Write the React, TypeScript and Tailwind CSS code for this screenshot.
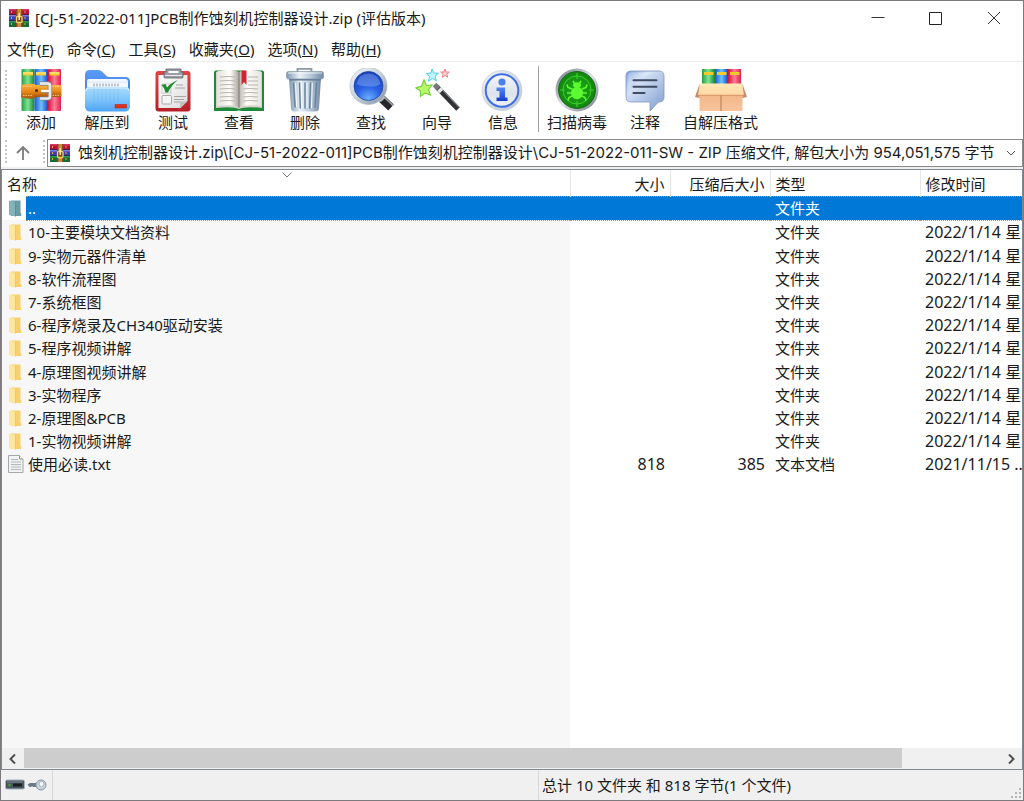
import React, { useState } from 'react';

interface Entry {
  name: string;
  kind: 'up' | 'folder' | 'text';
  size?: string;
  packed?: string;
  type: string;
  modified?: string;
}

const entries: Entry[] = [
  { name: '..', kind: 'up', type: '文件夹' },
  { name: '10-主要模块文档资料', kind: 'folder', type: '文件夹', modified: '2022/1/14 星' },
  { name: '9-实物元器件清单', kind: 'folder', type: '文件夹', modified: '2022/1/14 星' },
  { name: '8-软件流程图', kind: 'folder', type: '文件夹', modified: '2022/1/14 星' },
  { name: '7-系统框图', kind: 'folder', type: '文件夹', modified: '2022/1/14 星' },
  { name: '6-程序烧录及CH340驱动安装', kind: 'folder', type: '文件夹', modified: '2022/1/14 星' },
  { name: '5-程序视频讲解', kind: 'folder', type: '文件夹', modified: '2022/1/14 星' },
  { name: '4-原理图视频讲解', kind: 'folder', type: '文件夹', modified: '2022/1/14 星' },
  { name: '3-实物程序', kind: 'folder', type: '文件夹', modified: '2022/1/14 星' },
  { name: '2-原理图&PCB', kind: 'folder', type: '文件夹', modified: '2022/1/14 星' },
  { name: '1-实物视频讲解', kind: 'folder', type: '文件夹', modified: '2022/1/14 星' },
  { name: '使用必读.txt', kind: 'text', size: '818', packed: '385', type: '文本文档', modified: '2021/11/15 ..' },
];

const menus = [
  { label: '文件', accel: 'F' },
  { label: '命令', accel: 'C' },
  { label: '工具', accel: 'S' },
  { label: '收藏夹', accel: 'O' },
  { label: '选项', accel: 'N' },
  { label: '帮助', accel: 'H' },
];

const RarIcon = () => (
  <svg className="h-5 w-5 shrink-0" viewBox="0 0 20 20" aria-hidden="true">
    <rect x="0" y="1" width="20" height="6" fill="#b3123f" />
    <rect x="0" y="1" width="20" height="1.5" fill="#d8386a" />
    <rect x="0" y="7" width="20" height="6" fill="#3b3fb0" />
    <rect x="0" y="7" width="20" height="1.5" fill="#7d7fe0" />
    <rect x="0" y="13" width="20" height="6" fill="#176b34" />
    <rect x="0" y="13" width="20" height="1.5" fill="#2f9a53" />
    <path d="M0 6.5H20M0 12.5H20" stroke="#2b2346" strokeWidth=".8" />
    <path d="M2.5 3v2M2.5 9v2M2.5 15v2M16 3v2M16 9v2M16 15v2" stroke="#e0a838" strokeWidth="1" />
    <rect x="7" y="1" width="6.5" height="18" fill="#8a4a1c" />
    <rect x="8.5" y="1" width="3.5" height="18" fill="#cf8c3e" />
    <rect x="7.5" y="8.5" width="5.500" height="6" rx="1" fill="#7b4a1c" stroke="#f2d067" strokeWidth="1.300" />
    <path d="M10.2 5v7" stroke="#fff3c2" strokeWidth="1.3" />
  </svg>
);

const AddIcon = () => (
  <svg className="h-11 w-13" viewBox="0 0 52 44" aria-hidden="true">
    <defs>
      <linearGradient id="bookGreen">
        <stop offset="0" stopColor="#2b9e45" />
        <stop offset=".5" stopColor="#7fe391" />
        <stop offset="1" stopColor="#168334" />
      </linearGradient>
      <linearGradient id="bookBlue">
        <stop offset="0" stopColor="#1f56d8" />
        <stop offset=".5" stopColor="#6cc3fb" />
        <stop offset="1" stopColor="#1c46cf" />
      </linearGradient>
      <linearGradient id="bookRed">
        <stop offset="0" stopColor="#d5103a" />
        <stop offset=".5" stopColor="#ff7c93" />
        <stop offset="1" stopColor="#e01f49" />
      </linearGradient>
      <linearGradient id="belt" x2="0" y2="1">
        <stop offset="0" stopColor="#f7b447" />
        <stop offset=".5" stopColor="#e98a1a" />
        <stop offset="1" stopColor="#a8540b" />
      </linearGradient>
    </defs>
    <rect x="6.5" y="1" width="13" height="42" rx="1" fill="url(#bookGreen)" />
    <rect x="19.5" y="1" width="13.5" height="42" rx="1" fill="url(#bookBlue)" />
    <rect x="33" y="1" width="13" height="42" rx="1" fill="url(#bookRed)" />
    <path d="M8 5.8h10M21 5.8h10M34.5 5.8h10" stroke="#f6c92c" strokeWidth="3.4" />
    <path d="M8 5h10M21 5h10M34.5 5h10" stroke="#fff0a0" strokeWidth="1" />
    <path d="M6 17q9-2 14-1v14q-6 2-14-1z" fill="url(#belt)" />
    <path d="M19 17h26q1.500 0 1.500 1.500v9q0 1.500-1.500 1.500H19z" fill="url(#belt)" />
    <path d="M8 18.300h9M8 27.500h9M37.500 18.500h8M37.500 27.500h8" stroke="#ffd58a" strokeWidth=".8" strokeDasharray="1.5 1" />
    <path d="M25 15.500h8q2 0 2 2v11q0 2-2 2h-8" fill="none" stroke="#e6e9ed" strokeWidth="3.2" />
    <path d="M25 13.700h8.500q3.300 0 3.300 3.300v12q0 3.300-3.300 3.300H25M25 17.300h8v11.500h-8" fill="none" stroke="#7b828c" strokeWidth=".7" />
    <path d="M26 23h8" stroke="#f8f9fa" strokeWidth="2.400" />
    <path d="M26 24.600h8" stroke="#868d98" strokeWidth=".7" />
    <circle cx="21.500" cy="22.500" r="1.500" fill="#4a2707" />
  </svg>
);

const ExtractIcon = () => (
  <svg className="h-11 w-13" viewBox="0 0 52 44" aria-hidden="true">
    <defs>
      <linearGradient id="folderBack" x2="0" y2="1">
        <stop offset="0" stopColor="#5b9cf8" />
        <stop offset="1" stopColor="#2e6de4" />
      </linearGradient>
      <linearGradient id="folderFront" x2="0" y2="1">
        <stop offset="0" stopColor="#a9dcfd" />
        <stop offset=".55" stopColor="#7cc4fa" />
        <stop offset="1" stopColor="#4ca3f2" />
      </linearGradient>
    </defs>
    <path d="M4 7q0-5 5-5h8q3 0 4.500 2l4 4q1 1 3 1h16q4.500 0 4.500 5v22H4z" fill="url(#folderBack)" />
    <path d="M6 13q0-2 2-2h36q3 0 3 3v12H6z" fill="#f4f8fd" />
    <path d="M6.500 14h40" stroke="#d5e2f1" strokeWidth=".8" />
    <path d="M4 23q0-4 4-4h36q5 0 5 4v15q0 5.500-5.500 5.500h-34Q4 43.500 4 38z" fill="url(#folderFront)" />
    <path d="M5 23q0-3 3-3h36q4 0 4 3" fill="none" stroke="#d6f0ff" />
    <path d="M13 21v18M17 21v18M21 21v18M25 21v18M29 21v18M33 21v13M37 21v13" stroke="#6eaee6" strokeWidth=".8" opacity=".55" />
    <path d="M13 15.500v3M16 15.500v3M19 15.500v3M22 15.500v3M25 15.500v3M28 15.500v3M31 15.500v3M34 15.500v3M37 15.500v3" stroke="#8a94a1" strokeWidth="1" />
    <rect x="34" y="36.500" width="11.500" height="3.500" fill="#e3301a" stroke="#b81b10" strokeWidth=".5" />
  </svg>
);

const TestIcon = () => (
  <svg className="h-11 w-13" viewBox="0 0 52 44" aria-hidden="true">
    <defs>
      <linearGradient id="board" x2="0" y2="1">
        <stop offset="0" stopColor="#e04545" />
        <stop offset="1" stopColor="#b51f26" />
      </linearGradient>
      <linearGradient id="sheet" x2="1" y2="1">
        <stop offset="0" stopColor="#fff" />
        <stop offset="1" stopColor="#dcdcdc" />
      </linearGradient>
    </defs>
    <rect x="8.500" y="3" width="35" height="40.500" rx="3" fill="url(#board)" />
    <path d="M11.500 7h29v26l-7 7h-22z" fill="url(#sheet)" />
    <path d="M40.500 33l-8 8 1-7z" fill="#bdbdbd" />
    <path d="M19 1h15v3h2v5q0 1-1 1H18q-1 0-1-1V4h2z" fill="#9a9da3" stroke="#5f6268" strokeWidth=".8" />
    <path d="M21.500 3h10v2h-10z" fill="#fff" />
    <path d="M18 7.500h17" stroke="#e9ebee" strokeWidth="1" />
    <rect x="15" y="16" width="9" height="9" fill="none" stroke="#c9c9c9" />
    <rect x="15" y="27.500" width="9.500" height="8.500" rx="1" fill="#f4f4f4" stroke="#aaa" />
    <path d="M14.500 17l4-1 1.500 3.500q4-5 11-7.500-6 4-10 12.500h-2.500q-1-5-4-7.500z" fill="#1d8a2f" />
    <path d="M29 17h7M28 20h10M27 28.500h12M27 31.500h10M27 34h7" stroke="#a29c9c" strokeWidth=".9" />
  </svg>
);

const ViewIcon = () => (
  <svg className="h-11 w-13" viewBox="0 0 52 44" aria-hidden="true">
    <defs>
      <linearGradient id="pageLeft">
        <stop offset="0" stopColor="#e6e1dc" />
        <stop offset=".6" stopColor="#fffefa" />
        <stop offset="1" stopColor="#a9a39c" />
      </linearGradient>
      <linearGradient id="pageRight">
        <stop offset="0" stopColor="#b9b3ab" />
        <stop offset=".35" stopColor="#fffefa" />
        <stop offset="1" stopColor="#e8e4df" />
      </linearGradient>
    </defs>
    <path d="M1 4.500q0-2 2-2h46q2 0 2 2V43H29q-3-1-6 0H1z" fill="#1e8a37" />
    <path d="M3 40V4q16-3 23 1 7-4 23-1v36q-17-2-23 1-6-3-23-1z" fill="#d6d2ce" />
    <path d="M4 38V3.500Q19 0 26 4v35q-7-3-22-1z" fill="url(#pageLeft)" />
    <path d="M48 38V3.500Q33 0 26 4v35q7-3 22-1z" fill="url(#pageRight)" />
    <path d="M7 9q9-1 15 0M7 13q9-1 15 0M7 17q9-1 15 0M7 21q9-1 15 0M7 25q9-1 15 0M7 29q9-1 15 0M7 33q9-1 15 0M30 21q6-1 15 0M30 25q6-1 15 0M30 29q6-1 15 0M30 33q6-1 15 0M35 9h10M35 13h10M35 17h10" fill="none" stroke="#b0aba7" strokeWidth=".9" />
    <path d="M26 4v36" stroke="#77716b" strokeWidth=".8" />
    <path d="M28.500 2.500h5V17L31 14l-2.500 3z" fill="#d62332" />
  </svg>
);

const DeleteIcon = () => (
  <svg className="h-11 w-13" viewBox="0 0 52 44" aria-hidden="true">
    <defs>
      <linearGradient id="bin">
        <stop offset="0" stopColor="#7f98b2" />
        <stop offset=".35" stopColor="#e9f0f6" />
        <stop offset=".65" stopColor="#b7c8da" />
        <stop offset="1" stopColor="#7089a4" />
      </linearGradient>
    </defs>
    <path d="M18.500 4V.8h14V4" fill="none" stroke="#8a98a8" strokeWidth="1.800" />
    <path d="M10 10h32l-2 30q0 3.500-4 3.500H16q-4 0-4-3.500z" fill="url(#bin)" />
    <path d="M10 10h32l-.3 2.500H10.300z" fill="#5f7690" />
    <path d="M14.500 15l1.500 24M20.500 15l.8 25M26 15v25M31.500 15l-.8 25M37.500 15l-1.500 24" stroke="#6a829d" strokeWidth="1.500" strokeLinecap="round" />
    <path d="M16.500 15l1.300 24M22.500 15l.5 25M28 15v25M33.300 15l-.8 25" stroke="#f8fbfd" strokeWidth="1" />
    <rect x="7.500" y="3.500" width="37" height="7.500" rx="2" fill="url(#bin)" stroke="#8497ac" strokeWidth=".7" />
    <path d="M9 5h34" stroke="#fff" opacity=".8" />
  </svg>
);

const FindIcon = () => (
  <svg className="h-11 w-13" viewBox="0 0 52 44" aria-hidden="true">
    <defs>
      <linearGradient id="ring" x2="1" y2="1">
        <stop offset="0" stopColor="#f5f8fb" />
        <stop offset=".5" stopColor="#c6d1dc" />
        <stop offset="1" stopColor="#7f8d9d" />
      </linearGradient>
      <radialGradient id="lens" cx=".5" cy=".95" r=".95">
        <stop offset="0" stopColor="#6cb2ff" />
        <stop offset=".45" stopColor="#2a63e4" />
        <stop offset="1" stopColor="#173cb4" />
      </radialGradient>
    </defs>
    <path d="M37 31l9 8.500" stroke="#24262a" strokeWidth="8" />
    <path d="M38.500 28.500l9.500 9" stroke="#a8abb0" strokeWidth="1.600" />
    <path d="M34 28l4 4" stroke="#b4bcc6" strokeWidth="6" />
    <circle cx="23.500" cy="18" r="18.500" fill="url(#ring)" stroke="#a6b2bf" strokeWidth=".6" />
    <circle cx="23.500" cy="18" r="14.500" fill="url(#lens)" stroke="#2147a8" strokeWidth=".8" />
    <path d="M11.500 16q2-10.500 12-10.500t12 10.500q-4 3-12 2.500t-12-2.500z" fill="#a7c8ff" opacity=".35" />
  </svg>
);

const WizardIcon = () => (
  <svg className="h-11 w-13" viewBox="0 0 52 44" aria-hidden="true">
    <path d="M13 12l2.500 5.500 5.500-.5-3.500 4.500 2 5.500-5.500-2-4.500 3.500v-5.500l-4.500-3 5.500-2z" fill="#b8f66a" stroke="#6fd233" strokeWidth="1.100" />
    <path d="M21 1l2 4 4.500.3-3.500 3 1.500 4.500-4-2.300-4 2.700 1-4.700-3.300-3 4.600-.4z" fill="#c0f4ff" stroke="#3fc8ec" strokeWidth=".9" />
    <path d="M34 1l1 3h3.300l-2.500 2 .9 3.200L34 7.500l-2.700 1.700.9-3.200-2.500-2H33z" fill="#ffd0d0" stroke="#f0777c" strokeWidth=".9" />
    <path d="M25 18l22 23" stroke="#303235" strokeWidth="5" />
    <path d="M31 21.500l17 18" stroke="#8c9095" strokeWidth="1" />
    <path d="M23.500 16.500l4 4" stroke="#77797c" strokeWidth="5" />
    <path d="M28 21l2.500 2.500" stroke="#e8e9ea" strokeWidth="5" />
  </svg>
);

const InfoIcon = () => (
  <svg className="h-11 w-13" viewBox="0 0 52 44" aria-hidden="true">
    <defs>
      <linearGradient id="infoRim" x2="1" y2="1">
        <stop offset="0" stopColor="#eef2f6" />
        <stop offset="1" stopColor="#bcc5d0" />
      </linearGradient>
      <linearGradient id="infoFill" x2="0" y2="1">
        <stop offset="0" stopColor="#f4f6fa" />
        <stop offset=".6" stopColor="#dde3ec" />
        <stop offset="1" stopColor="#eef1f6" />
      </linearGradient>
      <linearGradient id="infoMark" x2="0" y2="1">
        <stop offset="0" stopColor="#5289ee" />
        <stop offset="1" stopColor="#173bd0" />
      </linearGradient>
    </defs>
    <circle cx="25" cy="22.500" r="20" fill="url(#infoRim)" stroke="#bac4cf" strokeWidth=".6" />
    <circle cx="25" cy="22.500" r="16.300" fill="url(#infoFill)" stroke="#3d6fe2" strokeWidth="2" />
    <circle cx="25" cy="14" r="3.600" fill="#4a80ea" />
    <path d="M19.500 19.500H28v10h2.500v3.500H19.500v-3.500h3v-6.500h-3z" fill="url(#infoMark)" />
  </svg>
);

const ScanIcon = () => (
  <svg className="h-11 w-13" viewBox="0 0 52 44" aria-hidden="true">
    <defs>
      <linearGradient id="scanRim" x2="1" y2="1">
        <stop offset="0" stopColor="#6a727e" />
        <stop offset=".5" stopColor="#dfe3e8" />
        <stop offset="1" stopColor="#6c7480" />
      </linearGradient>
      <radialGradient id="scanFill">
        <stop offset="0" stopColor="#1fb018" />
        <stop offset="1" stopColor="#12860f" />
      </radialGradient>
    </defs>
    <circle cx="26" cy="22" r="21.500" fill="url(#scanRim)" />
    <circle cx="26" cy="22" r="18.500" fill="url(#scanFill)" stroke="#0b5a0d" strokeWidth=".8" />
    <circle cx="26" cy="22" r="14" fill="none" stroke="#3fce30" />
    <path d="M26 5v6M26 33v6M9 22h5M38 22h5" stroke="#3fce30" strokeWidth="1.200" />
    <g stroke="#5dfa31" strokeWidth="1.600" fill="none">
      <path d="M22 13l2 3M30 13l-2 3" />
      <path d="M21 21l-4-1.500-1-3M31 21l4-1.500 1-3M20 25h-4M32 25h4M21 28l-3 1.500-1 3M31 28l3 1.500 1 3" />
    </g>
    <ellipse cx="26" cy="17" rx="4" ry="2.800" fill="#5dfa31" />
    <ellipse cx="26" cy="25" rx="6" ry="6.200" fill="#5dfa31" />
  </svg>
);

const CommentIcon = () => (
  <svg className="h-11 w-13" viewBox="0 0 52 44" aria-hidden="true">
    <defs>
      <linearGradient id="bubble" x2="1" y2="1">
        <stop offset="0" stopColor="#6f97da" />
        <stop offset=".3" stopColor="#d3e1f5" />
        <stop offset=".65" stopColor="#a9bfe2" />
        <stop offset="1" stopColor="#7f9bcb" />
      </linearGradient>
    </defs>
    <path d="M12 3h28q5 0 5 5v21q0 5-5 5h-.5L31 43v-9H12q-5 0-5-5V8q0-5 5-5z" fill="url(#bubble)" stroke="#8098c4" strokeWidth=".8" />
    <path d="M8.500 22V9q0-4.500 4.500-4.500h25Q18 7 8.500 22z" fill="#fff" opacity=".28" />
    <path d="M14.500 12.300h23M14.500 18.800h23M14.500 25h11" stroke="#3e4b60" strokeWidth="2" strokeLinecap="round" />
  </svg>
);

const SfxIcon = () => (
  <svg className="h-11 w-13" viewBox="0 0 52 44" aria-hidden="true">
    <defs>
      <linearGradient id="boxFront" x2="0" y2="1">
        <stop offset="0" stopColor="#f0ae7e" />
        <stop offset="1" stopColor="#f8c49b" />
      </linearGradient>
      <linearGradient id="boxFlap" x2="0" y2="1">
        <stop offset="0" stopColor="#ffeab4" />
        <stop offset="1" stopColor="#fdd6a4" />
      </linearGradient>
    </defs>
    <rect x="7" y="1" width="13" height="16" fill="url(#bookGreen)" />
    <rect x="20" y="1" width="13" height="16" fill="url(#bookBlue)" />
    <rect x="33" y="1" width="13" height="16" fill="url(#bookRed)" />
    <path d="M9 5.500h9.500M22 5.500h9.500M35 5.500h9.500" stroke="#f6c92c" strokeWidth="2.800" />
    <path d="M4.500 17h43v26H4.500z" fill="url(#boxFront)" />
    <path d="M26 27v16" stroke="#b57848" />
    <path d="M4.500 16L0 29l4.500 1zM47.500 16L52 29l-4.500 1z" fill="#c48c6a" />
    <path d="M5 15.500h42l2 11.500H3z" fill="url(#boxFlap)" />
    <path d="M3 27.300h46" stroke="#d18f60" strokeWidth=".8" />
  </svg>
);

const mainTools = [
  { label: '添加', icon: <AddIcon /> },
  { label: '解压到', icon: <ExtractIcon /> },
  { label: '测试', icon: <TestIcon /> },
  { label: '查看', icon: <ViewIcon /> },
  { label: '删除', icon: <DeleteIcon /> },
  { label: '查找', icon: <FindIcon /> },
  { label: '向导', icon: <WizardIcon /> },
  { label: '信息', icon: <InfoIcon /> },
];

const extraTools = [
  { label: '扫描病毒', icon: <ScanIcon /> },
  { label: '注释', icon: <CommentIcon /> },
  { label: '自解压格式', icon: <SfxIcon /> },
];

const FileIcon: React.FC<{ kind: Entry['kind'] }> = ({ kind }) => {
  if (kind === 'text') {
    return (
      <svg className="ml-1 h-5 w-5" viewBox="0 0 20 20" aria-hidden="true">
        <path d="M2.500 1.500h11l3.500 3.500v13.500h-14.500z" fill="#f3f3f3" stroke="#a3a8aa" />
        <path d="M13.500 1.500v3.500H17" fill="#fff" stroke="#8f9496" />
        <path d="M5 5.500h7M5 8h10M5 10.500h10M5 13h10M5 15.500h10" stroke="#b3b8ba" />
      </svg>
    );
  }
  const up = kind === 'up';
  return (
    <svg className="ml-1 h-5 w-5" viewBox="0 0 20 20" aria-hidden="true">
      <path d="M5 2.500h9.500v12.500h.7V18H5z" fill={up ? '#6a9ca4' : '#f7d170'} />
      <path d="M3 2.500l6.500 1.500v14.500L3 17z" fill={up ? '#83b3b9' : '#ffe59e'} />
      <path d="M9.500 4v14.500" stroke={up ? '#568890' : '#edc35c'} strokeWidth=".8" />
    </svg>
  );
};

const Grip = () => <span className="my-1 w-0.5 shrink-0 self-stretch border-l-2 border-dotted border-[#c4c4c4]" />;

const App: React.FC = () => {
  const [selected, setSelected] = useState(0);

  return (
    <div className="flex h-screen flex-col overflow-hidden border border-[#7d7a7d] bg-[#f0f0f0] font-['Noto_Sans','Noto_Sans_CJK_SC',sans-serif] text-[15px] leading-5 text-[#1a1a1a]">
      {/* Title bar */}
      <header className="flex h-9 shrink-0 items-center bg-white pb-0.5 pl-2">
        <RarIcon />
        <h1 className="ml-1 flex-1 truncate pl-0.5">[CJ-51-2022-011]PCB制作蚀刻机控制器设计.zip (评估版本)</h1>
        <button aria-label="最小化" className="flex h-full w-[58px] items-center justify-center">
          <svg className="h-3.5 w-3.5" viewBox="0 0 14 14" stroke="#333"><path d="M0.500 6.500h13" /></svg>
        </button>
        <button aria-label="最大化" className="flex h-full w-[58px] items-center justify-center">
          <svg className="h-3.5 w-3.5" viewBox="0 0 14 14" fill="none" stroke="#222"><path d="M.5 1.500h12v12H.5z" /></svg>
        </button>
        <button aria-label="关闭" className="flex h-full w-[58px] items-center justify-center">
          <svg className="h-3.5 w-3.5" viewBox="0 0 14 14" stroke="#333"><path d="M1 1l12 12M13 1L1 13" /></svg>
        </button>
      </header>

      {/* Menu */}
      <nav className="flex h-[25px] shrink-0 items-center gap-[13px] border-b border-[#ececec] bg-white pl-1.5">
        {menus.map((menu) => (
          <button key={menu.accel}>
            {menu.label}(<u>{menu.accel}</u>)
          </button>
        ))}
      </nav>

      {/* Toolbar */}
      <div className="flex shrink-0 bg-white py-1 pl-1">
        <Grip />
        <div className="flex pr-0.5 pl-px">
          {mainTools.map((tool) => (
            <button key={tool.label} className="flex w-[66px] shrink-0 flex-col items-center pt-0.5">
              {tool.icon}
              <span>{tool.label}</span>
            </button>
          ))}
        </div>
        <div className="flex border-l border-[#a0a0a0]">
          {extraTools.map((tool) => (
            <button key={tool.label} className="flex shrink-0 flex-col items-center px-1 pt-0.5">
              {tool.icon}
              <span className="px-1 whitespace-nowrap">{tool.label}</span>
            </button>
          ))}
        </div>
      </div>

      {/* Address bar */}
      <div className="flex h-[31px] shrink-0 items-end bg-white pl-1">
        <Grip />
        <button aria-label="向上" className="mr-1 flex h-7 w-8 items-center justify-center">
          <svg className="h-4 w-4" viewBox="0 0 16 16" fill="none" stroke="#7a7a7a" strokeWidth="1.800">
            <path d="M8 15V2M2 8l6-6 6 6" />
          </svg>
        </button>
        <Grip />
        <div className="ml-0.5 flex h-7 min-w-0 flex-1 items-center border border-[#8a8a8a] bg-white pl-0.5">
          <RarIcon />
          <input
            aria-label="路径"
            readOnly
            className="ml-1 min-w-0 flex-1 pl-1 font-['Inter','Noto_Sans_CJK_SC',sans-serif] outline-none"
            value="蚀刻机控制器设计.zip\[CJ-51-2022-011]PCB制作蚀刻机控制器设计\CJ-51-2022-011-SW - ZIP 压缩文件, 解包大小为 954,051,575 字节"
          />
          <button aria-label="展开" className="flex h-full w-[22px] items-center justify-center">
            <svg className="h-2.5 w-2.5" viewBox="0 0 10 10" fill="none" stroke="#555"><path d="M1 3l4 4 4-4" /></svg>
          </button>
        </div>
      </div>

      {/* File list */}
      <main className="mt-0.5 flex min-h-0 flex-1 flex-col border border-[#828790] bg-white">
        <div className="min-h-0 flex-1 overflow-hidden bg-[linear-gradient(to_right,#f7f7f7_568px,white_568px)]">
          <table className="h-[306px] w-[1120px] table-fixed border-collapse">
            <colgroup>
              <col className="w-6" />
              <col className="w-[544px]" />
              <col className="w-[100px]" />
              <col className="w-[100px]" />
              <col className="w-[150px]" />
              <col />
            </colgroup>
            <thead>
              <tr className="h-[26px] bg-white text-left">
                <th colSpan={2} className="relative border-r border-[#e5e5e5] px-[5px] pt-0.5 font-normal">
                  名称
                  <svg className="absolute top-0 left-[280px] h-2 w-2.5" viewBox="0 0 10 8" fill="none" stroke="#777">
                    <path d="M.5 2.500l4.500 4.500 4.500-4.500" />
                  </svg>
                </th>
                <th className="border-r border-[#e5e5e5] px-[5px] pt-0.5 text-right font-normal">大小</th>
                <th className="border-r border-[#e5e5e5] px-[5px] pt-0.5 text-right font-normal">压缩后大小</th>
                <th className="border-r border-[#e5e5e5] px-[5px] pt-0.5 font-normal">类型</th>
                <th className="px-[5px] pt-0.5 font-normal">修改时间</th>
              </tr>
            </thead>
            <tbody className="whitespace-nowrap">
              {entries.map((entry, i) => {
                const hl = i === selected ? 'border-y border-dotted border-[#d68a4a] bg-[#0078d7] text-white' : '';
                return (
                  <tr key={entry.name} onClick={() => setSelected(i)}>
                    <td className={i === selected ? 'bg-white' : ''}><FileIcon kind={entry.kind} /></td>
                    <td className={`pl-0.5 ${hl}`}>{entry.name}</td>
                    <td className={`px-[5px] text-right text-base leading-5 ${hl}`}>{entry.size}</td>
                    <td className={`px-[5px] text-right text-base leading-5 ${hl}`}>{entry.packed}</td>
                    <td className={`px-[5px] ${hl}`}>{entry.type}</td>
                    <td className={`px-[5px] text-base leading-5 ${hl}`}>{entry.modified}</td>
                  </tr>
                );
              })}
            </tbody>
          </table>
        </div>

        {/* Horizontal scrollbar */}
        <div className="flex h-[21px] shrink-0 bg-[#f0f0f0]">
          <button aria-label="向左滚动" className="flex w-[22px] items-center justify-center">
            <svg className="h-3 w-3" viewBox="0 0 12 12" fill="none" stroke="#505050" strokeWidth="2"><path d="M8 1.500L3.500 6 8 10.500" /></svg>
          </button>
          <div className="flex-1">
            <div className="h-5 w-[90%] bg-[#cdcdcd]" />
          </div>
          <button aria-label="向右滚动" className="flex w-[22px] items-center justify-center">
            <svg className="h-3 w-3" viewBox="0 0 12 12" fill="none" stroke="#505050" strokeWidth="2"><path d="M4 1.500L8.500 6 4 10.500" /></svg>
          </button>
        </div>
      </main>

      {/* Status bar */}
      <footer className="flex h-[30px] shrink-0 items-center">
        <div className="flex w-[538px] self-stretch border-r border-[#d7d7d7]">
          <div className="flex w-[52px] items-center gap-0.5 border-r border-[#d7d7d7] pl-1">
            <svg className="h-3 w-5" viewBox="0 0 20 12" aria-hidden="true">
              <rect x=".5" y="1" width="19" height="9" rx="1.500" fill="#4a555f" stroke="#a5b4c0" />
              <path d="M2 3h16" stroke="#7c8993" />
              <path d="M8 6h9" stroke="#191e22" strokeWidth="3" />
              <circle cx="4.500" cy="6" r="1.300" fill="#4f9a3a" />
            </svg>
            <svg className="h-3 w-5" viewBox="0 0 20 12" aria-hidden="true">
              <path d="M10 4H3L.5 5.500 2.500 8H4l1-1 1 1h4z" fill="#6a7a86" />
              <circle cx="14" cy="6" r="5" fill="#c9d5dd" stroke="#8797a3" />
              <circle cx="14.500" cy="5" r="2.500" fill="#f9fbfc" stroke="#a4b2bc" />
            </svg>
          </div>
        </div>
        <div className="flex-1 pl-[3px]">总计 10 文件夹 和 818 字节(1 个文件)</div>
        <svg className="h-3 w-3 self-end" viewBox="0 0 12 12" fill="#b5b5b5" aria-hidden="true">
          <path d="M8 0h2v2H8zM8 4h2v2H8zM8 8h2v2H8zM4 4h2v2H4zM4 8h2v2H4zM0 8h2v2H0z" />
        </svg>
      </footer>
    </div>
  );
};

export default App;
